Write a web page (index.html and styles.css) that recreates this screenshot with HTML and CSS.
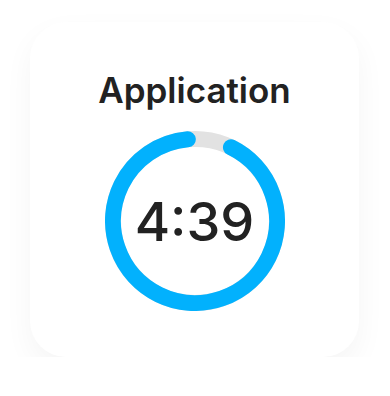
FILE: index.html
```html
<!DOCTYPE html>
<html lang="en">

<head>
  <meta charset="UTF-8">
  <meta name="viewport" content="width=device-width, initial-scale=1.0">
  <link rel="stylesheet" href="styles.css">
  <title>Application Timer</title>
</head>

<body>
  <div class="card">
    <h1 class="title">Application</h1>

    <div class="timer">
      <svg class="ring" width="180" height="180" viewBox="0 0 180 180">
        <circle class="track" cx="90" cy="90" r="82" />
        <circle class="progress" cx="90" cy="90" r="82"
          stroke-dasharray="470 515.2" transform="rotate(-64 90 90)" />
      </svg>
      <span class="time">4:39</span>
    </div>
  </div>
</body>

</html>
```

FILE: styles.css
```css
body {
  margin: 0;
  background-color: #ffffff;
  font-family: 'Inter', 'Noto Sans', sans-serif;
}

.card {
  box-sizing: border-box;
  width: 329px;
  height: 335px;
  margin: 22px 0 0 30px;
  padding-top: 47px;
  border-radius: 36px;
  background-color: #ffffff;
  box-shadow: 0 12px 30px rgba(0, 0, 0, 0.045);
  display: flex;
  flex-direction: column;
  align-items: center;
}

.title {
  margin: 0;
  font-size: 35px;
  line-height: 42px;
  font-weight: 600;
  color: #222222;
}

.timer {
  position: relative;
  width: 180px;
  height: 180px;
  margin-top: 20px;
  display: flex;
  align-items: center;
  justify-content: center;
}

.ring {
  position: absolute;
  top: 0;
  left: 0;
}

.track {
  fill: none;
  stroke: #e2e2e2;
  stroke-width: 16;
}

.progress {
  fill: none;
  stroke: #02b1fd;
  stroke-width: 16;
  stroke-linecap: round;
}

.time {
  position: relative;
  font-size: 54px;
  font-weight: 500;
  color: #222222;
}
```
